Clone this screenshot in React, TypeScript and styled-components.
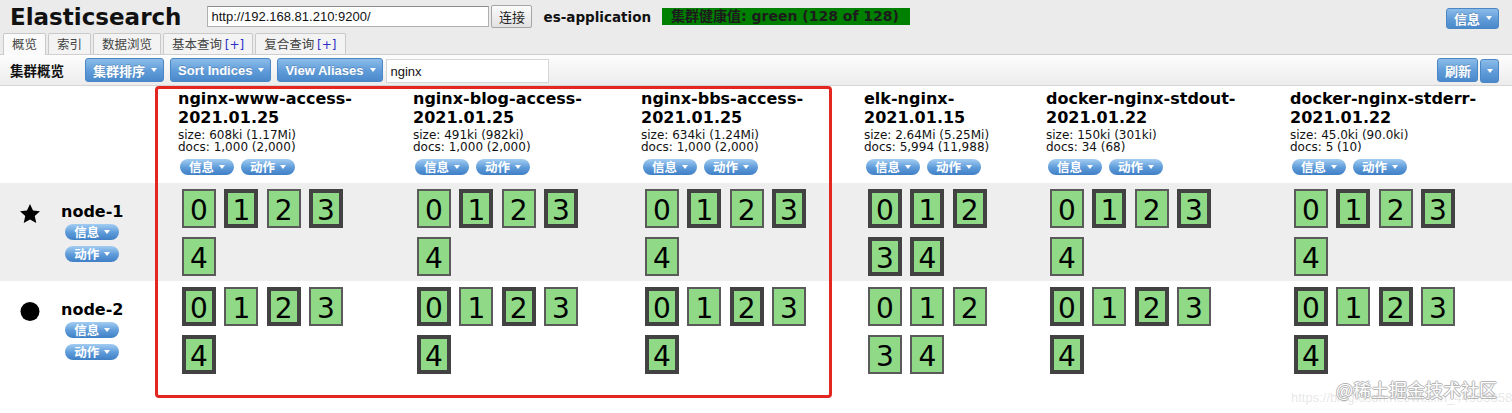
import React from 'react';
import styled, { createGlobalStyle } from 'styled-components';

const GlobalStyle = createGlobalStyle`
	html, body {
		margin: 0;
		padding: 0;
		background: #fff;
	}
	body {
		font-family: 'DejaVu Sans', Verdana, 'Noto Sans CJK SC', sans-serif;
		color: #000;
	}
	* {
		box-sizing: border-box;
	}
`;

type IndexInfo = {
	prefix: string;
	date: string;
	size: string;
	docs: string;
	perRow: number;
	node1Primary: number[];
};

const indices: IndexInfo[] = [
	{ prefix: 'nginx-www-access-', date: '2021.01.25', size: '608ki (1.17Mi)', docs: '1,000 (2,000)', perRow: 4, node1Primary: [1, 3] },
	{ prefix: 'nginx-blog-access-', date: '2021.01.25', size: '491ki (982ki)', docs: '1,000 (2,000)', perRow: 4, node1Primary: [1, 3] },
	{ prefix: 'nginx-bbs-access-', date: '2021.01.25', size: '634ki (1.24Mi)', docs: '1,000 (2,000)', perRow: 4, node1Primary: [1, 3] },
	{ prefix: 'elk-nginx-', date: '2021.01.15', size: '2.64Mi (5.25Mi)', docs: '5,994 (11,988)', perRow: 3, node1Primary: [0, 1, 2, 3, 4] },
	{ prefix: 'docker-nginx-stdout-', date: '2021.01.22', size: '150ki (301ki)', docs: '34 (68)', perRow: 4, node1Primary: [1, 3] },
	{ prefix: 'docker-nginx-stderr-', date: '2021.01.22', size: '45.0ki (90.0ki)', docs: '5 (10)', perRow: 4, node1Primary: [1, 3] }
];

const nodes = [
	{ name: 'node-1', master: true },
	{ name: 'node-2', master: false }
];

const shards = [0, 1, 2, 3, 4];

const App = () => {
	return (
		<Page>
			<GlobalStyle />
			<Header>
				<TopBar>
					<Brand>Elasticsearch</Brand>
					<UrlInput defaultValue='http://192.168.81.210:9200/' />
					<ConnectButton>连接</ConnectButton>
					<ClusterName>es-application</ClusterName>
					<Health>集群健康值: green (128 of 128)</Health>
					<Spacer />
					<BlueButton $top>
						信息 <Caret />
					</BlueButton>
				</TopBar>
				<TabBar>
					<Tab $active>概览</Tab>
					<Tab>索引</Tab>
					<Tab>数据浏览</Tab>
					<Tab>
						基本查询 <Plus>[+]</Plus>
					</Tab>
					<Tab>
						复合查询 <Plus>[+]</Plus>
					</Tab>
				</TabBar>
			</Header>

			<Toolbar>
				<ToolbarTitle>集群概览</ToolbarTitle>
				<BlueButton>
					集群排序 <Caret />
				</BlueButton>
				<BlueButton>
					Sort Indices <Caret />
				</BlueButton>
				<BlueButton>
					View Aliases <Caret />
				</BlueButton>
				<FilterInput defaultValue='nginx' />
				<Spacer />
				<SplitGroup>
					<BlueButton>刷新</BlueButton>
					<BlueButton $narrow>
						<Caret />
					</BlueButton>
				</SplitGroup>
			</Toolbar>

			<Overview>
				<Row>
					<div />
					{indices.map(ix => (
						<IndexHead key={ix.prefix}>
							<IndexName>
								<span>{ix.prefix}</span>
								<span>{ix.date}</span>
							</IndexName>
							<Meta>
								<div>size: {ix.size}</div>
								<div>docs: {ix.docs}</div>
							</Meta>
							<PillGroup>
								<Pill>
									信息 <Caret />
								</Pill>
								<Pill>
									动作 <Caret />
								</Pill>
							</PillGroup>
						</IndexHead>
					))}
				</Row>

				{nodes.map((node, ni) => (
					<Row key={node.name} $shade={ni === 0}>
						<NodeCell>
							<NodeInfo>
								{node.master ? (
									<NodeIcon viewBox='1.5 1.5 21 20'>
										<path d='M12 1.5l3.2 6.9 7.3.8-5.5 5 1.6 7.3L12 17.8l-6.6 3.7 1.6-7.3-5.5-5 7.3-.8z' fill='#000' />
									</NodeIcon>
								) : (
									<NodeIcon viewBox='0 0 24 24'>
										<circle cx='12' cy='12' r='12' fill='#000' />
									</NodeIcon>
								)}
								<NodeLabel>
									<NodeName>{node.name}</NodeName>
									<Pill>
										信息 <Caret />
									</Pill>
									<Pill>
										动作 <Caret />
									</Pill>
								</NodeLabel>
							</NodeInfo>
						</NodeCell>
						{indices.map(ix => (
							<ShardCell key={ix.prefix}>
								<ShardGrid $cols={ix.perRow}>
									{shards.map(s => {
										const onFirst = ix.node1Primary.includes(s);
										const primary = ni === 0 ? onFirst : !onFirst;
										return (
											<ShardBox key={s} $primary={primary}>
												{s}
											</ShardBox>
										);
									})}
								</ShardGrid>
							</ShardCell>
						))}
					</Row>
				))}

				<Highlight />
			</Overview>

			<Watermark>@稀土掘金技术社区</Watermark>
			<WatermarkUrl>https://blog.csdn.net/weixin_44953658</WatermarkUrl>
		</Page>
	);
};

const Page = styled.div`
	position: relative;
	min-height: 413px;
	overflow: hidden;
`;

const Header = styled.header`
	background: #ebebeb;
`;

const TopBar = styled.div`
	display: flex;
	align-items: center;
	height: 33px;
	padding: 0 13px 0 10px;
`;

const Brand = styled.h1`
	margin: 0 26px 0 0;
	font: bold 23px 'DejaVu Sans', Verdana, sans-serif;
	color: #111;
`;

const UrlInput = styled.input`
	width: 282px;
	height: 21px;
	padding: 0 3px;
	border: 1px solid #b0b0b0;
	border-top-color: #8c8c8c;
	background: #fff;
	font: 13px 'Liberation Sans', Arial, sans-serif;
	color: #111;
	outline: none;
`;

const ConnectButton = styled.button`
	margin-left: 2px;
	width: 41px;
	height: 23px;
	padding: 0;
	border: 1px solid #a5a5a5;
	border-radius: 2px;
	background: linear-gradient(#fbfbfb, #e2e2e2);
	font: 13px 'Noto Sans CJK SC', sans-serif;
	color: #222;
`;

const ClusterName = styled.span`
	margin-left: 11px;
	font: bold 13.5px 'DejaVu Sans', Verdana, sans-serif;
	color: #111;
`;

const Health = styled.span`
	margin-left: 11px;
	height: 17px;
	padding: 0 11px 0 9px;
	background: #008000;
	font: bold 14px/17px 'DejaVu Sans', Verdana, 'Noto Sans CJK SC', sans-serif;
	color: #1c1c1c;
	white-space: nowrap;
`;

const Spacer = styled.div`
	flex: 1;
`;

const TabBar = styled.nav`
	display: flex;
	align-items: flex-end;
	gap: 2px;
	height: 22px;
	padding-left: 3px;
	border-bottom: 1px solid #cfcfcf;
`;

const Tab = styled.div<{ $active?: boolean }>`
	height: ${p => (p.$active ? '22px' : '21px')};
	margin-bottom: ${p => (p.$active ? '-1px' : '0')};
	padding: 0 8px;
	border: 1px solid #c9c9c9;
	border-bottom: none;
	border-radius: 2px 2px 0 0;
	background: ${p => (p.$active ? '#fafafa' : '#f3f3f3')};
	font: 12.5px/20px 'Noto Sans CJK SC', sans-serif;
	color: #444;
	white-space: nowrap;
`;

const Plus = styled.span`
	font-family: 'DejaVu Sans', sans-serif;
	font-size: 12px;
	color: #3030c8;
`;

const Toolbar = styled.div`
	display: flex;
	align-items: center;
	height: 31px;
	padding: 0 13px 0 10px;
	background: linear-gradient(#fdfdfd, #ececec);
	border-bottom: 1px solid #d4d4d4;
`;

const ToolbarTitle = styled.span`
	margin-right: 21px;
	font: bold 13.5px 'Noto Sans CJK SC', sans-serif;
	color: #111;
`;

const Caret = styled.span`
	display: inline-block;
	width: 0;
	height: 0;
	border-left: 3px solid transparent;
	border-right: 3px solid transparent;
	border-top: 4px solid #fff;
`;

const BlueButton = styled.button<{ $top?: boolean; $narrow?: boolean }>`
	display: inline-flex;
	align-items: center;
	justify-content: center;
	gap: 6px;
	height: ${p => (p.$top ? '21px' : '24px')};
	margin: ${p => (p.$top ? '3px 0 0 0' : '0 6px 0 0')};
	padding: ${p => (p.$narrow ? '0' : '0 6px 0 7px')};
	width: ${p => (p.$narrow ? '19px' : 'auto')};
	border: 1px solid #4b87c4;
	border-radius: 3px;
	background: linear-gradient(#8bbce9, #5f9bd8 55%, #4a89cb);
	font: bold 13px 'Liberation Sans', Arial, 'Noto Sans CJK SC', sans-serif;
	color: #fff;
	text-shadow: 0 -1px 0 rgba(0, 0, 0, 0.18);
	white-space: nowrap;
`;

const SplitGroup = styled.div`
	display: flex;
	align-items: center;

	${BlueButton} {
		margin: 0;
	}
	${BlueButton}:last-child {
		margin-left: 2px;
		margin-top: 2px;
	}
`;

const FilterInput = styled.input`
	width: 163px;
	height: 24px;
	margin: 2px 0 0 -3px;
	padding: 0 4px;
	border: 1px solid #d6d6d6;
	background: #fff;
	font: 13px 'Liberation Sans', Arial, sans-serif;
	color: #111;
	outline: none;
`;

const Overview = styled.section`
	position: relative;
`;

const Row = styled.div<{ $shade?: boolean }>`
	display: grid;
	grid-template-columns: 170px 235px 228px 223px 182px 244px 1fr;
	background: ${p => (p.$shade ? '#eeeeee' : '#fff')};
`;

const IndexHead = styled.div`
	padding: 3px 0 8px 8px;
`;

const IndexName = styled.div`
	font: bold 16px/19px 'DejaVu Sans', Verdana, sans-serif;
	color: #000;

	span {
		display: block;
		white-space: nowrap;
	}
`;

const Meta = styled.div`
	margin-top: 1.5px;
	font: 12px/12.5px 'DejaVu Sans', Verdana, sans-serif;
	color: #111;
	white-space: nowrap;
`;

const PillGroup = styled.div`
	display: flex;
	gap: 7px;
	margin: 5.5px 0 0 2px;
`;

const Pill = styled.span`
	display: inline-flex;
	align-items: center;
	gap: 5px;
	width: 54px;
	height: 16px;
	padding: 0 0 0 9px;
	border-radius: 8px;
	background: linear-gradient(#a3cdf2, #5d9ad9 55%, #3f7fc5);
	font: bold 12.5px/16px 'Noto Sans CJK SC', sans-serif;
	color: #fff;
	white-space: nowrap;
`;

const NodeCell = styled.div`
	display: flex;
	align-items: center;
	padding-left: 20px;
`;

const NodeInfo = styled.div`
	display: flex;
	align-items: flex-start;
	gap: 21px;
`;

const NodeIcon = styled.svg`
	width: 20px;
	height: 19px;
	margin-top: 2px;
`;

const NodeLabel = styled.div`
	display: flex;
	flex-direction: column;
	align-items: center;
	gap: 6px;
`;

const NodeName = styled.div`
	margin-bottom: -3px;
	font: bold 16px/19px 'DejaVu Sans', Verdana, sans-serif;
	color: #000;
`;

const ShardCell = styled.div`
	padding: 6px 0 5px 12px;
`;

const ShardGrid = styled.div<{ $cols: number }>`
	display: grid;
	grid-template-columns: repeat(${p => p.$cols}, 34px);
	grid-auto-rows: 39px;
	gap: 9px 8.3px;
`;

const ShardBox = styled.div<{ $primary: boolean }>`
	display: flex;
	align-items: center;
	justify-content: center;
	padding-top: 5px;
	background: #8fd987;
	border: ${p => (p.$primary ? '4px solid #424242' : '2px solid #5a5a5a')};
	font: 28px/1 'DejaVu Sans', Verdana, sans-serif;
	color: #000;
`;

const Highlight = styled.div`
	position: absolute;
	top: 0;
	left: 155px;
	width: 677px;
	height: 312px;
	border: 3px solid #e3261f;
	border-radius: 4px;
	pointer-events: none;
`;

const Watermark = styled.div`
	position: absolute;
	left: 1336px;
	top: 376px;
	font: 18px 'Noto Sans CJK SC', sans-serif;
	color: #fff;
	text-shadow: 1px 0 #b4b4b4, -1px 0 #b4b4b4, 0 1px #b4b4b4, 0 -1px #b4b4b4;
	white-space: nowrap;
`;

const WatermarkUrl = styled.div`
	position: absolute;
	left: 1291px;
	top: 390px;
	font: 13px 'Liberation Sans', Arial, sans-serif;
	color: rgba(170, 170, 170, 0.3);
	white-space: nowrap;
`;

export default App;
